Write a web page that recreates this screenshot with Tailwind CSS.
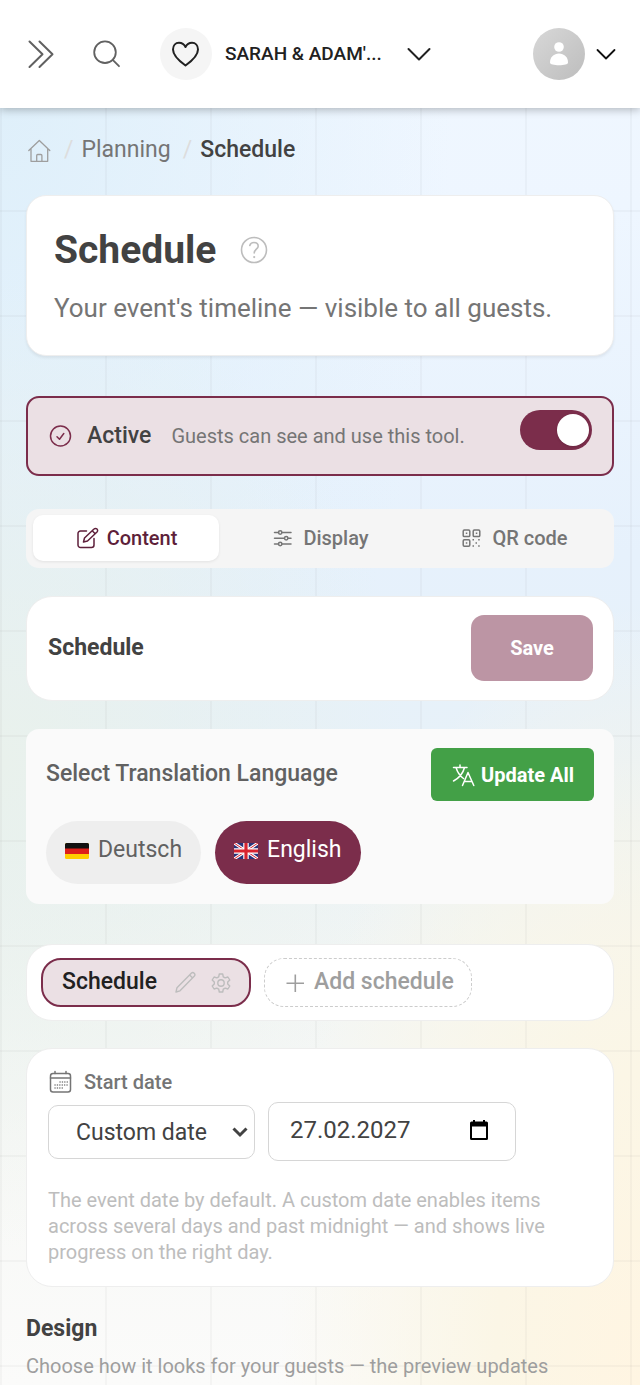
<!DOCTYPE html>
<html lang="en">
<head>
  <meta charset="UTF-8">
  <meta name="viewport" content="width=device-width, initial-scale=1">
  <title>Schedule</title>
  <script src="https://cdn.jsdelivr.net/npm/@tailwindcss/browser@4"></script>
</head>
<body class="min-h-screen font-[Roboto,sans-serif] text-[#424242] bg-[radial-gradient(ellipse_at_100%_100%,#fff5e2_0%,#fbf6e6_16%,#fbf6e600_40%),radial-gradient(ellipse_at_0%_55%,#e9f1ec_0%,#e9f1ec00_45%),radial-gradient(ellipse_at_0%_5%,#deeffa_0%,#deeffa00_50%),linear-gradient(180deg,#f0f7ff_0%,#eef6ff_15%,#e6f1fc_40%,#e7f1f8_55%,#f1f5f4_69%,#f7f8f6_82%,#fbfbfa_100%)]">
<div class="min-h-screen bg-[linear-gradient(90deg,#00000007_2px,transparent_2px),linear-gradient(#00000007_2px,transparent_2px)] bg-[length:105px_105px]">

  <!-- Header -->
  <header class="relative flex h-27 items-center bg-white pl-6 pr-[22px] shadow-[0_2px_8px_#00000040]">
    <button aria-label="Expand menu" class="flex size-8 items-center justify-center text-[#616161]">
      <svg class="size-8" viewBox="0 0 32 32" fill="none" stroke="currentColor" stroke-width="2" stroke-linecap="round" stroke-linejoin="round"><path d="M5.500 3.500 18.500 16.300 5.500 29M15.500 3.500 28.500 16.300 15.500 29"/></svg>
    </button>
    <button aria-label="Search" class="ml-9 flex size-8 items-center justify-center text-[#616161]">
      <svg class="size-8" viewBox="0 0 32 32" fill="none" stroke="currentColor" stroke-width="1.800" stroke-linecap="round"><circle cx="13" cy="14.200" r="10.800"/><path d="m20.700 21.800 6.300 6.400"/></svg>
    </button>
    <button class="ml-9 flex items-center text-[#212121]">
      <span class="flex size-13 items-center justify-center rounded-full bg-[#f5f5f5]">
        <svg class="size-8" viewBox="0 0 32 32" fill="none" stroke="currentColor" stroke-width="2" stroke-linejoin="round"><path d="M15.500 27.500C8.500 22.500 3 17.500 3 11.500 3 7.500 5.600 4.700 9 4.700c2.900 0 5.200 1.600 6.500 4.300 1.300-2.700 3.600-4.300 6.500-4.300 3.400 0 6 2.800 6 6.800 0 6-5.500 11-12.500 16Z"/></svg>
      </span>
      <span class="ml-[13px] text-[19px] font-medium">SARAH &amp; ADAM'...</span>
      <svg class="ml-[25px] h-6 w-6" viewBox="0 0 24 24" fill="none" stroke="currentColor" stroke-width="2" stroke-linecap="round" stroke-linejoin="round"><path d="M1.500 7 12 17.500 22.500 7"/></svg>
    </button>
    <button aria-label="Account" class="ml-auto flex items-center gap-[9px] text-[#111111]">
      <span class="flex size-13 items-center justify-center rounded-full bg-linear-to-br from-[#d8d8d8] to-[#bdbdbd]">
        <svg class="size-6" viewBox="0 0 24 24" fill="#fff"><circle cx="12" cy="5" r="4.800"/><path d="M3 20.500c0-5.500 4-9 9-9s9 3.500 9 9c0 1.800-4 2.700-9 2.700s-9-.900-9-2.700Z"/></svg>
      </span>
      <svg class="size-6" viewBox="0 0 24 24" fill="none" stroke="currentColor" stroke-width="1.800" stroke-linecap="round" stroke-linejoin="round"><path d="m3.500 8 8.500 8.500L20.500 8"/></svg>
    </button>
  </header>

  <main class="px-[26px] pt-6">
    <!-- Breadcrumb -->
    <nav class="flex h-9 items-center text-[23px] text-[#757575]">
      <a href="#" aria-label="Home" class="text-[#9e9e9e]">
        <svg class="size-[26px]" viewBox="0 0 26 26" fill="none" stroke="currentColor" stroke-width="1.300" stroke-linejoin="round" stroke-linecap="round"><path d="M2.800 13.500 13.300 3.500 23.800 13.500M5 11.500V24.300H21.700V11.500M10.700 24.300V18.500a1 1 0 0 1 1-1h3.200a1 1 0 0 1 1 1v5.800"/></svg>
      </a>
      <span class="ml-3 text-[#dddddd]">/</span>
      <a href="#" class="ml-2">Planning</a>
      <span class="ml-3 text-[#dddddd]">/</span>
      <span class="ml-2 font-medium text-[#424242]">Schedule</span>
    </nav>

    <!-- Title -->
    <section class="mt-[27px] rounded-[20px] border border-[#eeeeee] bg-white px-[27px] pt-7 pb-[27px] shadow-[0_2px_3px_#00000010]">
      <div class="flex items-center gap-6">
        <h1 class="text-[39px] leading-[52px] font-bold">Schedule</h1>
        <button aria-label="Help" class="text-[#bdbdbd]">
          <svg class="size-7" viewBox="0 0 28 28" fill="none" stroke="currentColor" stroke-width="1.600" stroke-linecap="round" stroke-linejoin="round"><circle cx="14" cy="14" r="12.500"/><path d="M9.800 9.500C10.300 7.500 12 6.500 14 6.500c2.500 0 4.200 1.500 4.200 3.700 0 2.800-4 3.300-4 6.800"/><path d="M14.200 21v.1" stroke-width="2.200"/></svg>
        </button>
      </div>
      <p class="mt-3 text-[26px] leading-10 text-[#757575]">Your event's timeline — visible to all guests.</p>
    </section>

    <!-- Active state -->
    <section class="mt-10 flex h-20 items-center rounded-[13px] border-2 border-[#7b2d4b] bg-[#ebe0e4] px-5">
      <svg class="size-6 text-[#7b2d4b]" viewBox="0 0 24 24" fill="none" stroke="currentColor" stroke-width="1.500" stroke-linecap="round" stroke-linejoin="round"><circle cx="12.500" cy="12" r="10"/><path d="m9 12.700 2.500 2.500 4.300-5.700"/></svg>
      <label for="active" class="ml-[15px] text-[23px] font-medium">Active</label>
      <span class="ml-5 text-xl text-[#757575]">Guests can see and use this tool.</span>
      <input id="active" type="checkbox" checked class="mb-3 ml-auto flex h-10 w-[72px] appearance-none items-center rounded-full bg-[#bdbdbd] p-[3px] before:size-8 before:rounded-full before:bg-white before:shadow checked:justify-end checked:bg-[#7b2d4b]">
    </section>

    <!-- Tabs -->
    <div role="tablist" class="mt-[33px] grid grid-cols-3 gap-2 rounded-[13px] bg-[#f5f5f5] px-[7px] pt-1.5 pb-[7px] text-xl font-medium text-[#757575]">
      <button role="tab" aria-selected="true" class="flex h-[46px] items-center justify-center gap-2 rounded-[10px] bg-white text-[#5e1f3a] shadow-[0_1px_3px_#00000014]">
        <svg class="size-6" viewBox="0 0 24 24" fill="none" stroke="currentColor" stroke-width="1.500" stroke-linecap="round" stroke-linejoin="round"><path d="M11.500 5H5.500a2.500 2.500 0 0 0-2.500 2.500V19a2.500 2.500 0 0 0 2.500 2.500H16.500A2.500 2.500 0 0 0 19 19v-6.500"/><path d="m8.500 16 1-4 9.500-9a2 2 0 0 1 3 3l-9.500 9ZM17.200 4.800l3 3"/></svg>
        Content
      </button>
      <button role="tab" aria-selected="false" class="flex h-[46px] items-center justify-center gap-2">
        <svg class="size-6" viewBox="0 0 24 24" fill="none" stroke="currentColor" stroke-width="1.500" stroke-linecap="round"><path d="M3.500 6.500H7.500M11 6.500h9M3.500 12.300h9.500M17 12.300h3M3.500 18H7.500M11 18h9"/><circle cx="9.200" cy="6.500" r="1.700"/><circle cx="15.200" cy="12.300" r="1.700"/><circle cx="9.200" cy="18" r="1.700"/></svg>
        Display
      </button>
      <button role="tab" aria-selected="false" class="flex h-[46px] items-center justify-center gap-2">
        <svg class="size-6" viewBox="0 0 24 24" fill="none" stroke="currentColor" stroke-width="1.500"><rect x="3.200" y="4" width="6.600" height="6.600" rx="1.200"/><rect x="13.200" y="4" width="6.600" height="6.600" rx="1.200"/><rect x="3.200" y="13.700" width="6.600" height="6.600" rx="1.200"/><path d="M5.800 7.300h1.500M15.800 7.300h1.500M5.800 17h1.500M12.500 13.800h1.500M18.200 13.800h1.500M15.500 16.900h1.500M12.500 20h1.500M18.200 20h1.500"/></svg>
        QR code
      </button>
    </div>

    <!-- Save bar -->
    <section class="mt-7 flex items-center justify-between rounded-[26px] border border-[#eeeeee] bg-white pt-[18px] pb-[19px] pl-[21px] pr-5">
      <h2 class="text-[23px] font-bold">Schedule</h2>
      <button class="h-[66px] w-[122px] rounded-[13px] bg-[#bc95a4] text-xl font-bold text-white">Save</button>
    </section>

    <!-- Translation language -->
    <section class="mt-7 rounded-[13px] bg-[#fafafa] px-5 pt-[19px] pb-5">
      <div class="flex items-center justify-between">
        <h2 class="text-[23px] font-medium text-[#616161]">Select Translation Language</h2>
        <button class="flex h-[53px] items-center gap-1.5 rounded-md bg-[#43a047] px-5 text-xl font-bold text-white">
          <svg class="size-6" viewBox="0 0 24 24" fill="none" stroke="currentColor" stroke-width="1.500" stroke-linecap="round" stroke-linejoin="round"><path d="M2.500 4.500h13.500M9 2v2.500M5 4.500C6.500 9.500 9 13 12.500 15.500M13.500 4.500C12 10.500 8 15 2.500 18M11.500 22.500 17 9.500l5.800 13M13.300 18.500h7.700"/></svg>
          Update All
        </button>
      </div>
      <div class="mt-5 flex gap-[14px] text-[23px]">
        <button class="flex h-[63px] items-center gap-[9px] rounded-full bg-[#eeeeee] px-[19px] pb-1 text-[#616161]">
          <svg class="h-4 w-6" viewBox="0 0 24 16"><rect width="24" height="16" rx="1.500" fill="#ffce00"/><path d="M0 5h24v6H0z" fill="#dd1f1a"/><path d="M0 5.500V1.500A1.500 1.500 0 0 1 1.500 0h21A1.500 1.500 0 0 1 24 1.500v4Z" fill="#111"/></svg>
          Deutsch
        </button>
        <button class="flex h-[63px] items-center gap-[9px] rounded-full bg-[#7b2d4b] px-[19px] pb-1 text-white">
          <svg class="h-4 w-6" viewBox="0 0 24 16"><rect width="24" height="16" rx="1.500" fill="#29337a"/><path d="m0 0 24 16M24 0 0 16" stroke="#fff" stroke-width="3"/><path d="m0 0 24 16M24 0 0 16" stroke="#d8232f" stroke-width="1"/><path d="M12 0v16M0 8h24" stroke="#fff" stroke-width="5.500"/><path d="M12 0v16M0 8h24" stroke="#d8232f" stroke-width="3.200"/></svg>
          English
        </button>
      </div>
    </section>

    <!-- Schedules -->
    <section class="mt-10 flex gap-[13px] rounded-[26px] border border-[#eeeeee] bg-white px-[14px] py-[13px] text-[23px] font-medium">
      <div class="flex h-[49px] items-center rounded-[20px] border-2 border-[#7b2d4b] bg-[#ebe0e4] pl-[19px] pr-4 text-[#212121]">
        <button>Schedule</button>
        <button aria-label="Rename" class="ml-4 text-[#bdbdbd]">
          <svg class="size-6" viewBox="0 0 24 24" fill="none" stroke="currentColor" stroke-width="1.400" stroke-linejoin="round"><path d="m3 21 1-4.300L18.300 2.300a1.900 1.900 0 0 1 2.900 2.900L7 19.800ZM16.700 4l2.900 2.900"/></svg>
        </button>
        <button aria-label="Settings" class="ml-3 text-[#bdbdbd]">
          <svg class="size-6" viewBox="0 0 24 24" fill="none" stroke="currentColor" stroke-width="1.400" stroke-linejoin="round"><circle cx="12" cy="12" r="3.200"/><path d="M10.300 3h3.400l.6 2.800 1.900 1.100 2.700-.9 1.900 3-2.100 2v2l2.100 2-1.900 3-2.700-.9-1.900 1.100-.6 2.800h-3.400l-.6-2.800-1.900-1.100-2.700.9-1.900-3 2.100-2v-2l-2.100-2 1.900-3 2.700.9 1.900-1.100Z"/></svg>
        </button>
      </div>
      <button class="flex h-[49px] items-center gap-2 rounded-[20px] border border-dashed border-[#cccccc] px-[17px] text-[#9e9e9e]">
        <svg class="size-6" viewBox="0 0 24 24" fill="none" stroke="currentColor" stroke-width="1.600"><path d="M13.300 3.500v17.500M4.500 12.300h17.500"/></svg>
        Add schedule
      </button>
    </section>

    <!-- Start date -->
    <section class="mt-[27px] rounded-[26px] border border-[#eeeeee] bg-white px-[21px] pt-[19px] pb-[21px]">
      <label for="mode" class="flex h-7 items-center gap-3 text-xl font-medium text-[#757575]">
        <svg class="size-6" viewBox="0 0 24 24" fill="none" stroke="currentColor" stroke-width="1.500" stroke-linecap="round"><rect x="2.500" y="3.500" width="20" height="18.500" rx="2.500"/><path d="M2.500 8h20M7 1.500V3.500M18 1.500V3.500"/><path d="M12 12h7.500M7 15h12.500M7 18h9.500" stroke-dasharray=".1 2.300"/></svg>
        Start date
      </label>
      <div class="mt-1.5 flex items-center gap-[13px]">
        <div class="relative">
          <select id="mode" class="h-[54px] w-[207px] appearance-none rounded-[10px] border border-[#d6d6d6] bg-white pt-[3px] pl-[27px] text-[23px]">
            <option>Custom date</option>
            <option>Event date</option>
          </select>
          <svg class="pointer-events-none absolute top-[19px] right-[7px] size-4" viewBox="0 0 16 16" fill="none" stroke="currentColor" stroke-width="3"><path d="m1.500 4.500 6.500 6.500 6.500-6.500"/></svg>
        </div>
        <div class="flex h-[59px] w-[248px] items-center rounded-[10px] border border-[#d6d6d6] bg-white pr-[25px] pb-[3px] pl-[21px]">
          <input type="text" aria-label="Date" value="27.02.2027" class="w-full min-w-0 text-2xl outline-none">
          <button aria-label="Open calendar" class="text-black">
            <svg class="size-[22px]" viewBox="0 0 22 22" fill="currentColor"><path fill-rule="evenodd" d="M5 1h2v1.500h8V1h2v1.500h1.500A1.500 1.500 0 0 1 20 4v15.500a1.500 1.500 0 0 1-1.500 1.500h-15A1.500 1.500 0 0 1 2 19.500V4a1.500 1.500 0 0 1 1.500-1.500H5ZM4 7.500V19h14V7.500Z"/></svg>
          </button>
        </div>
      </div>
      <p class="mt-[26px] max-w-[520px] text-xl leading-[26px] text-[#bdbdbd]">The event date by default. A custom date enables items across several days and past midnight — and shows live progress on the right day.</p>
    </section>

    <!-- Design -->
    <h2 class="mt-[26px] text-[23px] leading-8 font-bold">Design</h2>
    <p class="mt-2 text-xl leading-[26px] text-[#9e9e9e]">Choose how it looks for your guests — the preview updates</p>
  </main>
</div>
</body>
</html>
